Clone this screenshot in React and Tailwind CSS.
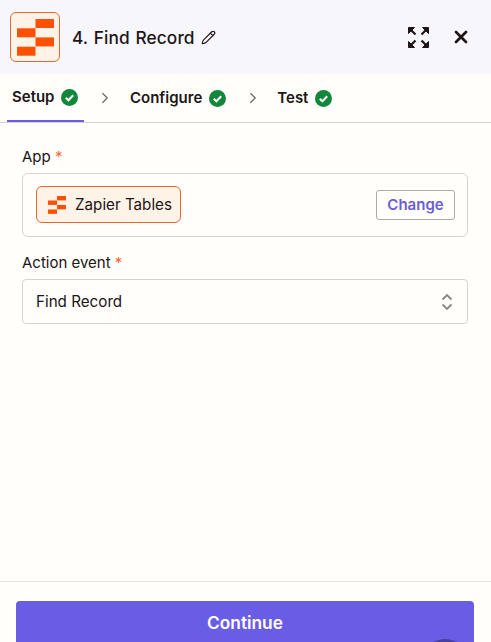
import { Pencil, X, ChevronRight } from "lucide-react";

function TablesLogo({ className }) {
  return (
    <svg viewBox="0 0 37 37" className={className} fill="#ff4f00">
      <rect x="18.5" y="0" width="18.5" height="9" />
      <rect x="0" y="9.3" width="18.5" height="9" />
      <rect x="18.5" y="18.4" width="18.5" height="9" />
      <rect x="0" y="27.7" width="18.5" height="9" />
    </svg>
  );
}

function DoneBadge() {
  return (
    <svg viewBox="0 0 17 17" className="w-[17px] h-[17px] shrink-0">
      <circle cx="8.5" cy="8.5" r="8.5" fill="#12863a" />
      <path d="M4.8 8.8l2.6 2.5 4.8-5" fill="none" stroke="#fff" strokeWidth="2" />
    </svg>
  );
}

function ExpandIcon() {
  return (
    <svg viewBox="0 0 21 21" className="w-[21px] h-[21px]" fill="#201515" stroke="#201515" strokeWidth="2.2">
      <path d="M.5 6.5V.5H6.500z" strokeWidth="1" />
      <path d="M20.5 6.5V.5H14.500z" strokeWidth="1" />
      <path d="M.5 14.500v6H6.500z" strokeWidth="1" />
      <path d="M20.500 14.500v6H14.500z" strokeWidth="1" />
      <path d="M2 2l5.500 5.500M19 2l-5.500 5.500M2 19l5.500-5.500M19 19l-5.500-5.500" fill="none" />
    </svg>
  );
}

function Step({ label, active }) {
  return (
    <div className={`h-full flex items-center gap-[7px] -mb-px pt-[1px] ${active ? "px-[5px] w-[77px] border-b-2 border-[#6a5de5]" : ""}`}>
      <span className="text-[15px] font-semibold text-[#201515]">{label}</span>
      <DoneBadge />
    </div>
  );
}

export default function App() {
  return (
    <div className="relative h-screen overflow-hidden flex flex-col bg-[#fffefb] text-[#201515] font-['Inter',sans-serif]">
      <div className="h-[74px] shrink-0 bg-[#f7f6fd] flex items-center pl-[10px] pr-[20px]">
        <div className="w-[50px] h-[50px] rounded-[6px] border border-[#e2692c] bg-[#fff3e8] flex items-center justify-center">
          <TablesLogo className="w-[37px] h-[37px]" />
        </div>
        <span className="ml-[12px] text-[17.300px] font-[450] tracking-[0.1px] [word-spacing:1px] pt-[1px]">4. Find Record</span>
        <Pencil size={15} className="ml-[6px]" strokeWidth={1.8} />
        <div className="ml-auto flex items-center gap-[22px]">
          <ExpandIcon />
          <X size={14} strokeWidth={3.2} className="w-[20px] h-[20px]" />
        </div>
      </div>

      <div className="h-[49px] shrink-0 flex items-stretch pl-[7px] border-b border-[#d4d2cd]">
        <Step label="Setup" active />
        <div className="w-[46px] pr-[4px] flex items-center justify-center">
          <ChevronRight size={18} className="text-[#6f6b68]" strokeWidth={1.6} />
        </div>
        <Step label="Configure" />
        <div className="w-[51px] pl-[3px] flex items-center justify-center">
          <ChevronRight size={18} className="text-[#6f6b68]" strokeWidth={1.6} />
        </div>
        <Step label="Test" />
      </div>

      <div className="flex-1 px-[22px] pt-[24px]">
        <div className="text-[15px] leading-[20px] mb-[6px]">
          App <span className="text-[#f7692a]">*</span>
        </div>
        <div className="h-[64px] w-[446px] rounded-[6px] border border-[#d6d4cf] flex items-center justify-between pl-[13px] pr-[12px]">
          <div className="h-[37px] w-[145px] -mt-[1px] rounded-[6px] border border-[#e2692c] bg-[#fff3e8] flex items-center pl-[11px] gap-[9px]">
            <TablesLogo className="w-[18px] h-[18px]" />
            <span className="text-[15.2px] pt-[1px]">Zapier Tables</span>
          </div>
          <button className="h-[30px] w-[79px] rounded-[3px] border border-[#aeaaa6] text-[15px] font-semibold text-[#6a5fd0]">
            Change
          </button>
        </div>

        <div className="text-[15px] leading-[20px] mt-[16px] mb-[6px]">
          Action event <span className="text-[#f7692a]">*</span>
        </div>
        <div className="h-[45px] w-[446px] rounded-[4px] border border-[#d6d4cf] flex items-center justify-between pl-[13px] pr-[14px]">
          <span className="text-[15.2px] pt-[1px]">Find Record</span>
          <svg viewBox="0 0 12 18" className="w-[12px] h-[18px]" fill="none" stroke="#8a8682" strokeWidth="1.8">
            <path d="M1.5 6.5L6 2l4.5 4.5" />
            <path d="M1.5 11.5L6 16l4.5-4.5" />
          </svg>
        </div>
      </div>

      <div className="h-[61px] shrink-0 border-t border-[#e9e7e3] pt-[19px] px-[16px]">
        <button className="w-[458px] h-[60px] rounded-[4px] bg-[#6a5de5] text-white text-[17.3px] font-semibold pb-[17px] pt-[1px]">
          Continue
        </button>
      </div>

      <div className="absolute left-[420px] top-[639px] w-[50px] h-[50px] rounded-full bg-[#46409f]" />
    </div>
  );
}
